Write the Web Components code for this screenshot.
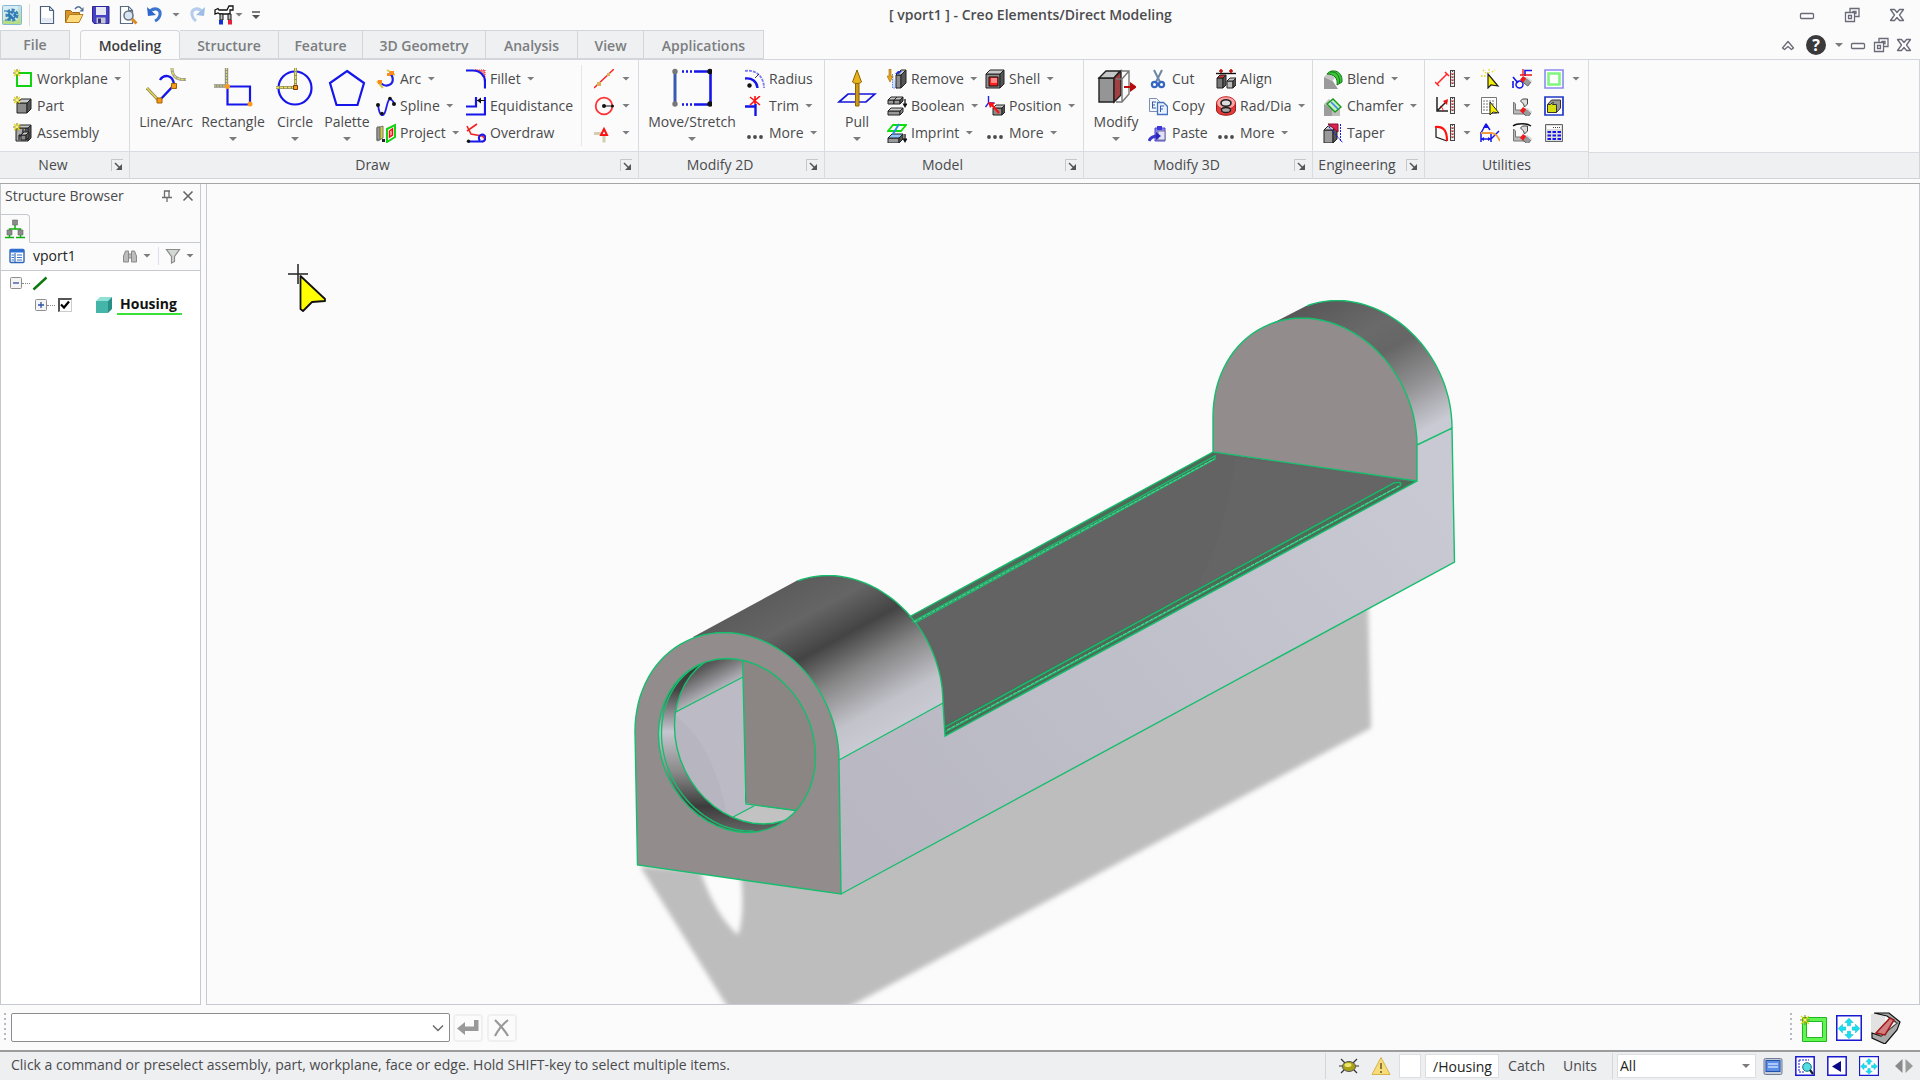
<!DOCTYPE html>
<html lang="en">
<head>
<meta charset="utf-8">
<title>[ vport1 ] - Creo Elements/Direct Modeling</title>
<style>
html, body { margin: 0; height: 100%; }
body { font: 14px/20px "Open Sans", "Noto Sans", sans-serif; color: #4a4a4c; background: #fbfbfb; overflow: hidden; }
</style>
</head>
<body>
<cr-app></cr-app>
<script>
const BASE = `
*{box-sizing:border-box}
button,input,select{font:inherit;color:inherit;margin:0;padding:0;border:0;background:none;border-radius:0;outline:0}
button{display:flex;align-items:center}
svg{display:block}
`;
function define(name, css, html) {
  customElements.define(name, class extends HTMLElement {
    constructor() {
      super();
      this.attachShadow({ mode: 'open' });
    }
    connectedCallback() {
      const body = typeof html === 'function' ? html(this) : html;
      this.shadowRoot.innerHTML = `<style>${BASE}${css}</style>${body}`;
    }
  });
}

/* ---------- icons ---------- */
const cube = (x, y, w, h, d, front = '#8c8c8c', top = '#c9c9c9', side = '#555', line = '#222') =>
  `<g stroke="${line}" stroke-linejoin="round"><path fill="${front}" d="M${x} ${y + d}h${w}v${h}h-${w}z"/><path fill="${top}" d="M${x} ${y + d}l${d}-${d}h${w}l-${d} ${d}z"/><path fill="${side}" d="M${x + w} ${y + d}l${d}-${d}v${h}l-${d} ${d}z"/></g>`;
const spark = (x, y, r = 4) =>
  `<g stroke-width="1.1"><path stroke="#8a8430" d="M${x - r} ${y}h${2 * r}M${x} ${y - r}v${2 * r}"/><path stroke="#e6d800" d="M${x - r + 1} ${y - r + 1}l${2 * r - 2} ${2 * r - 2}M${x - r + 1} ${y + r - 1}l${2 * r - 2}-${2 * r - 2}"/></g><circle cx="${x}" cy="${y}" r="1.3" fill="#fff27a"/>`;
const ruler = `<rect x="15.5" y="1.5" width="4" height="16" fill="#eee" stroke="#444"/><path stroke="#d22" d="M16 5h3M16 8h3M16 11h3M16 14h3"/><path stroke="#555" d="M17.500 2v15" stroke-dasharray="1 2"/>`;
const arrows4 = `<g fill="#18dff0" stroke="#0aa6c4" stroke-width=".4"><path d="M12 3l4 4h-2.500v3h-3v-3H8z"/><path d="M12 22l4-4h-2.500v-3h-3v3H8z"/><path d="M2 12.500l4-4V11h3v3H6v2.500z"/><path d="M22 12.500l-4-4V11h-3v3h3v2.500z"/></g>`;
const eraser = (x, y) => `<g transform="translate(${x} ${y}) rotate(38)"><rect x="3" width="7" height="5" fill="#9a9a9a" stroke="#555" stroke-width=".8"/><rect width="4" height="5" fill="#f01818"/><path fill="#d8d8d8" d="M3 0h7l1-2H4z"/></g>`;
const flag = `<path fill="#b8b8b8" stroke="#777" d="M1.500 6l2 2v6h7l3 4H1.500z"/><path fill="#ddd" stroke="#444" d="M8.500 5l2-2h5v5l-3 3-1-3z"/>`;
const PIC = {
  app: [20, `<defs><linearGradient id="a" x2="0" y2="1"><stop stop-color="#bfe0f5"/><stop offset="1" stop-color="#b4dd7c"/></linearGradient></defs><rect x=".5" y=".5" width="19" height="19" rx="1" fill="url(#a)" stroke="#86b8d6"/><rect x="1" y="1" width="15" height="14" fill="#e6f3fb" opacity=".6"/><circle cx="10" cy="10" r="5" fill="none" stroke="#3b83b8" stroke-width="3" stroke-dasharray="3 1.500"/><circle cx="10" cy="10" r="4" fill="#2c78b5"/><path stroke="#a9d0ea" stroke-width="1.200" d="M8 8l4 4M12 8l-2 2"/><path stroke="#1d6fae" d="M3 15h4M2 6h3" />`],
  newdoc: [20, `<path fill="#fff" stroke="#4c5f7c" stroke-width="1.200" d="M3.500 1.500h9l4 4v13h-13z"/><path fill="#c9d6e6" stroke="#4c5f7c" d="M12.500 1.500v4h4z"/><path fill="#e2e9f2" d="M5 13h10v4.500H5z"/>`],
  open: [20, `<path fill="#d9952c" stroke="#9a6a1c" d="M1.500 17.500v-12h5l2 2h7v3"/><path fill="#ffdb7c" stroke="#b57f22" d="M1.500 17.500l4-8h13.500l-4 8z"/><path fill="none" stroke="#4f6c92" stroke-width="1.400" d="M11 4c2-3 5-3 6.500 0"/><path fill="#4f6c92" d="M19.500 2v4.500h-4z"/>`],
  save: [20, `<path fill="#4740c2" stroke="#2b2699" d="M1.500 1.500h16.500v17H3l-1.500-2z"/><path fill="#e6e8f4" d="M5 2h10v8H5z"/><path fill="#c2c5d6" d="M5.500 12.500h9v6h-9z"/><path fill="#343078" d="M7 13.500h3v4.500H7z"/>`],
  preview: [20, `<path fill="#fff" stroke="#5a6b85" stroke-width="1.200" d="M2.500 1.500h8l4 4v13h-12z"/><path fill="#cfd9e6" stroke="#5a6b85" d="M10.500 1.500v4h4z"/><circle cx="10.500" cy="10.500" r="4.500" fill="#d7e6f2" stroke="#6b7480" stroke-width="1.500"/><path stroke="#e08b1f" stroke-width="3" d="M14 14l4.500 4.500"/>`],
  undo: [20, `<path fill="none" stroke="#3c74d0" stroke-width="3" d="M5 6c6-4.500 11-1 10 4-.5 2.500-2 4.500-5 6"/><path fill="#2c66cf" d="M2 2l1 9 8-1z"/>`],
  redo: [20, `<path fill="none" stroke="#b5cdec" stroke-width="3" d="M15 6c-6-4.500-11-1-10 4 .5 2.500 2 4.500 4 6"/><path fill="#9dbce6" d="M18 2l-1 9-8-1z"/>`],
  tools: [20, `<path fill="#fff" stroke="#111" stroke-width="1.300" d="M1 5l3-1.500 1 1.500h8l2-4h4v4h-3v4H6L4 8 1 9z"/><path fill="#bbb" stroke="#111" d="M6 9h3v6H6zM14 9h3v6h-3z"/><path fill="#1030d8" d="M5 15h4v4.500H5z"/><path fill="#e81f3a" d="M14 15h4v4.500h-4z"/>`],
  custom: [12, `<path stroke="#555" stroke-width="1.500" d="M2 3h8"/><path fill="#555" d="M2 6h8L6 10z"/>`],
  workplane: [20, `<path fill="none" stroke="#12d312" stroke-width="2" d="M4 4h14v13H4z"/>${spark(4, 4)}`],
  part: [20, `${cube(4, 3, 10, 10, 4)}${spark(4, 4)}`],
  assembly: [20, `${cube(3, 2, 12, 13, 3, '#aaa')}<path fill="#777" stroke="#111" d="M10 6v6H6v5M13 5v8h-6"/>${cube(8, 9, 5, 5, 3)}${spark(4, 4)}`],
  linearc: [40, `<path stroke="#8d8a60" stroke-width="3" d="M1 21l12 13"/><path stroke="#e8d84a" stroke-width="1.300" d="M1 21l12 13"/><path stroke="#999" stroke-width="3" fill="none" d="M26 1c0 7 3 12 14 11.500"/><path stroke="#e3d75d" stroke-width="1.500" stroke-dasharray="3 1" fill="none" d="M26 1c0 7 3 12 14 11.500"/><path stroke="#1616ea" stroke-width="2.400" fill="none" d="M14 13c3-5 13-7 14 5L13 34"/><path fill="#f29a1a" stroke="#a85f00" d="M11 31h5v5h-5zM25.500 16.500h5v5h-5z"/>`],
  rectangle: [40, `<path stroke="#8f8f86" stroke-width="3.400" d="M13.500 1v17M1 19h12"/><path stroke="#e0d96c" stroke-width="1.200" stroke-dasharray="2 1" d="M13.500 1v17M1 19h12"/><path fill="none" stroke="#1616ea" stroke-width="2.200" d="M14.500 19.500h22.500v18H14.500z"/><circle cx="14.500" cy="19.500" r="2.500" fill="#ff9a1a"/><circle cx="37" cy="37" r="2.500" fill="#ff9a1a"/>`],
  circle: [40, `<circle cx="20" cy="21" r="16.500" fill="none" stroke="#1616ea" stroke-width="2.200"/><path stroke="#8f8f60" stroke-width="3" d="M20.500 1v19M1 20.500h19"/><path stroke="#e8e05a" stroke-width="1.400" stroke-dasharray="3 1" d="M20.500 1v19M1 20.500h19"/><path fill="#f29a1a" stroke="#7a3c00" d="M18.500 18.500h4v4h-4z"/>`],
  palette: [40, `<path fill="none" stroke="#1616ea" stroke-width="2.200" d="M20 4l17 12-6.500 22h-21L3 16z"/>`],
  arc: [20, `<path fill="none" stroke="#2020e8" stroke-width="2.200" d="M13 4c5 3 5 10 0 12-4 1.500-8-.5-9-4"/><path stroke="#d8c94a" stroke-width="2" d="M11 1l8 5M1 12l6 7"/><path fill="#ff8c1a" d="M14 2h4v4h-4zM2 11h4v4H2zM11 4h3v3h-3z"/>`],
  spline: [20, `<path fill="none" stroke="#2020e8" stroke-width="1.800" d="M2 9c2 14 6 12 8 4s3-14 8-6"/><g fill="#111"><circle cx="2" cy="9" r="2"/><circle cx="6" cy="17.500" r="1.800"/><circle cx="14" cy="2.500" r="1.800"/><circle cx="18" cy="8" r="2"/></g>`],
  project: [20, `<path fill="#d9d12a" stroke="#777" d="M1 5l6-2v12l-6 3z"/><path fill="#999" stroke="#666" d="M1 4h3v13H1z"/><path fill="#fff" stroke="#13d313" stroke-width="2" d="M11 6l8-4v12l-8 5z"/><path fill="#fbb" stroke="#e11" stroke-width="1.500" d="M13.500 8l3-2v6l-3 2z"/><path fill="#222" d="M6 16h3v3H6z"/>`],
  fillet: [20, `<path fill="#f88" stroke="#e22" stroke-dasharray="1 1" d="M9 1h10v10c0-6-4-10-10-10z"/><path fill="none" stroke="#1616ea" stroke-width="2.200" d="M0 1.500h7c7 0 12 5 12 11v7"/>`],
  equidist: [20, `<path fill="none" stroke="#1616ea" stroke-width="2.200" d="M0 10.500h10V1M0 18.500h19V1"/><path stroke="#111" d="M11 4.500h8"/><path fill="#111" d="M11 4.500l4-3v6z"/>`],
  overdraw: [20, `<path stroke="#f02424" stroke-width="1.600" fill="none" d="M1 8l10-7M1 3l4 8 11 2c4 2 3 5 0 6"/><path stroke="#1616ea" stroke-width="2" fill="none" d="M3 18.500h13a3.500 3.500 0 0 0 0-7 3.500 3.500 0 0 0-2 6"/><circle cx="2.500" cy="18.300" r="1.700" fill="#111"/>`],
  cline: [20, `<path stroke="#f22" stroke-width="1.500" d="M0 19L20 0"/><path fill="#d9b25c" d="M3 13h4v4H3zM13 4h3v3h-3z"/>`],
  ccircle: [20, `<circle cx="10" cy="10" r="8.300" fill="none" stroke="#f33" stroke-width="1.800"/><path stroke="#111" d="M10 10h8"/><circle cx="10" cy="10" r="2" fill="#111"/><circle cx="18.500" cy="10" r="1.500" fill="#111"/>`],
  csym: [20, `<path stroke="#d5cdb0" stroke-width="3" d="M0 10.500h10v9"/><path fill="#fff" stroke="#f11" stroke-width="2" d="M10 6l3 6H7z"/>`],
  move: [40, `<path stroke="#3d58b0" stroke-width="3" d="M3 4v33"/><path stroke="#1616ea" stroke-width="2.600" d="M38.500 4v33M24 4.500h13M24 37.500h13"/><path stroke="#1616ea" stroke-width="2.400" stroke-dasharray="2 2" d="M10 4.500h14M10 37.500h14"/><g><circle cx="3" cy="4.500" r="2.700" fill="#777"/><circle cx="3" cy="37" r="2.700" fill="#777"/><circle cx="38" cy="4.500" r="2.700" fill="#111"/><circle cx="38" cy="37" r="2.700" fill="#111"/></g>`],
  radius: [20, `<path fill="none" stroke="#7b7bf2" stroke-width="1.800" stroke-dasharray="3 1" d="M0 2c10-2 19 5 19 17"/><path fill="none" stroke="#1616ea" stroke-width="2.400" d="M0 9.500c7-1 12 3 12.500 9.500"/><circle cx="4.500" cy="16.500" r="2.200" fill="#111"/><path stroke="#333" d="M10 9l4-4"/>`],
  trim: [20, `<path stroke="#1616ea" stroke-width="2.400" d="M0 10.500h10.500M10.500 8v12"/><path stroke="#f11" stroke-width="1.600" d="M5 1l10 8M15 0L5 9M10 0v8"/>`],
  more: [20, `<g fill="#4a4a4c"><circle cx="4" cy="14" r="1.900"/><circle cx="10" cy="14" r="1.900"/><circle cx="16" cy="14" r="1.900"/></g>`],
  pull: [40, `<path fill="none" stroke="#1616d8" stroke-width="1.700" d="M2 35l9-8h27l-9 8z"/><path fill="#d09a10" stroke="#8a6300" d="M18.500 14h3.500v25h-3.500z"/><path fill="#ecb21c" stroke="#8a6300" d="M20 3l4.500 12c-2 2-7 2-9 0z"/>`],
  remove: [20, `<path stroke="#6a8cf0" stroke-dasharray="1.500 1" fill="#cfe0ff" d="M5.500 5v14h5"/>${cube(9, 1, 5, 13, 5)}<path fill="#2233c8" d="M8 5l3-3h4l-3 3z"/><path fill="#eaa31c" stroke="#a06a00" stroke-width=".6" d="M2 0h2v7h2l-3 6-3-6h2z"/>`],
  boolean: [20, `${cube(1, 1, 6, 4, 3, '#999')}${cube(7, 1, 6, 4, 3, '#999')}${cube(1, 12, 12, 4, 3, '#999', '#ccc', '#888')}<path stroke="#111" stroke-width="1.300" d="M18 3v6"/><path fill="#111" d="M15.500 7.500h5L18 12z"/>`],
  imprint: [20, `${cube(1, 11, 11, 5, 4, '#999', '#8ec4ff')}<path fill="#fff" stroke="#0be00b" stroke-width="1.800" d="M1 8l5-6h13l-5 6z"/><path stroke="#2b8df0" stroke-width="2" d="M12 1L6 11"/><path stroke="#111" stroke-width="1.300" d="M18 11v6"/><path fill="#111" d="M15.500 15.500h5L18 20z"/>`],
  shell: [20, `${cube(1, 1, 14, 14, 4, '#8e8e8e')}<path fill="#ff1f1f" stroke="#111" d="M4 8h9v9H4z"/><path fill="#ff8a8a" d="M6 9h6v5l-6 0z"/>`],
  position: [20, `${cube(8, 9, 9, 7, 3)}<path stroke="#2020e8" stroke-width="1.400" d="M3.500 0v7l-3 4M3.500 7h6"/><path stroke="#f11" stroke-width="2.200" d="M14 17L6 8"/><path fill="#f11" d="M3 6l7 1-5 5z"/>`],
  modify: [40, `<g stroke="#222" stroke-width="1.400"><path fill="#959595" d="M3 11h15v24H3z"/><path fill="#c6c6c6" d="M3 11l7-7h14l-6 7z"/><path fill="#a04040" d="M18 11l7-7v24l-7 7z"/><path fill="none" stroke="#777" d="M20 35h6l7-8V4h-8M26 35V12l7-8M20 12h6"/></g><path stroke="#b80c0c" stroke-width="2" d="M28 20h8"/><path fill="#b80c0c" d="M34 15l7 5-7 5z"/>`],
  cut: [20, `<path stroke="#6d87a8" stroke-width="2" d="M6 1l6 12M14 1L8 13"/><circle cx="6.500" cy="15.500" r="2.600" fill="none" stroke="#3566c4" stroke-width="2.200"/><circle cx="13.500" cy="15.500" r="2.600" fill="none" stroke="#3566c4" stroke-width="2.200"/>`],
  copy: [20, `<path fill="#f4f7fc" stroke="#7b8fb4" d="M1.500 2.500h7l3 3v10h-10z"/><path stroke="#3d5a94" d="M4 6h4M4 9h3M4 12h4M4.500 6v6"/><path fill="#eaf1fc" stroke="#4472c0" stroke-width="1.300" d="M9.500 6.500h6l4 4v8h-10z"/><path stroke="#2f5fb4" d="M12 10h4M12 13h3M12.500 10v6"/>`],
  paste: [20, `<path fill="#8c86f0" stroke="#4a44cf" d="M7 5h10v13H7z"/><path fill="#fff" stroke="#777" d="M10 8h7v9h-7z" opacity=".75"/><path fill="#3e38d8" d="M9 3h5v4H9z"/><path stroke="#3a36cc" stroke-width="3" d="M1 18c2-5 6-5 9-5"/><path fill="#2a28b8" d="M8 9l5 4-5 4z"/>`],
  align: [20, `<path stroke="#111" stroke-width="1.400" d="M0 4.500h20"/><path stroke="#c01010" stroke-width="1.600" d="M5 0v4M15 0v4M3 2h4M13 2h4"/>${cube(1, 6, 6, 10, 3, '#777', '#c33')}${cube(11, 9, 6, 7, 3, '#bbb')}`],
  raddia: [20, `<path fill="#e83a3a" stroke="#9d1d1d" d="M.5 7v7c0 7 19 7 19 0V7"/><ellipse cx="10" cy="7" rx="9.500" ry="6.300" fill="#ffa4a4" stroke="#c02424"/><ellipse cx="10" cy="7" rx="5" ry="3.300" fill="#ddd" stroke="#222" stroke-width="1.600"/><ellipse cx="10" cy="14" rx="4.500" ry="2.500" fill="#aaa" stroke="#222" stroke-width="1.300"/>`],
  blend: [20, `<path fill="#9a9a9a" d="M1 8l8 3 6 9H1z"/><path fill="#c4c4c4" d="M1 8l5-5 6 6-3 3z"/><path fill="#3fc43f" stroke="#0d7a0d" d="M4 5c3-5 16-5 15 8l-5 3c1-7-3-11-10-11z"/><path fill="none" stroke="#0d7a0d" d="M7 3c6-1 10 3 9.500 11"/>`],
  chamfer: [20, `<path fill="#9c9c9c" d="M1 8l8 4v8H1z"/><path fill="#bdbdbd" d="M9 20h8v-7l-8 0zM1 8l5-5 6 6-3 3z"/><path fill="#bff0bf" stroke="#159a15" stroke-width="1.300" d="M4 8l6-5 8 8-6 5z"/><path stroke="#3a87e8" stroke-width="1.600" d="M8 6l7 7"/>`],
  taper: [20, `${cube(1, 3, 9, 13, 4, '#9a9a9a')}<path fill="#e02050" stroke="#801030" d="M5 1h10v8z"/><path stroke="#1616ea" stroke-dasharray="2 1" d="M17.500 1v18M6 4l14 16"/>`],
  meas1: [20, `<path stroke="#f22" stroke-width="1.500" d="M2 15L12 5M0 13l4 4M10 3l4 4"/>${ruler}`],
  meas2: [20, `<path stroke="#222" stroke-width="1.500" fill="none" d="M2 1v14h11M2 15L12 5"/><path fill="#e11" d="M13 3l-1 6-4-4z"/><path stroke="#e11" d="M5 10c2 1 3 3 3 5"/>${ruler}`],
  meas3: [20, `<path stroke="#222" stroke-width="1.300" fill="none" d="M1 4v10l11 4"/><path stroke="#f11" stroke-width="2.200" fill="none" d="M0 4c9-1 12 4 12 14"/>${ruler}`],
  select: [20, `<path fill="#f4ee00" stroke="#222" stroke-width="1.200" d="M8 5v14l3-3 7 1z"/><path stroke="#e8d800" stroke-width="1.300" stroke-dasharray="1.500 1.500" d="M1 7h5M3 1l4 4M9 0v4M12 3l3-2"/>`],
  list: [20, `<path fill="#fff" stroke="#777" d="M1.500 1.500h15v16h-15z"/><path stroke="#777" stroke-dasharray="2 1" d="M3 5h12M3 8h12M3 11h12M3 14h12"/><path fill="#f4ee00" stroke="#222" d="M10 6v13l3-3 6 1z"/>`],
  dims: [20, `<path stroke="#1616ea" stroke-width="1.500" fill="none" d="M1 9v10M11 9v10M1 16h10M6 1L1 10M6 1l4 6M11 16l8-8"/><path fill="#1616ea" d="M6 0l3 5H3zM1 16l3-2v4zM11 16l-3-2v4z"/><path stroke="#f29a3a" stroke-width="1.800" fill="none" d="M1 10h10c5 0 7 4 9 8"/>`],
  del1: [20, `<path stroke="#1616ea" stroke-width="1.600" fill="none" d="M1 8l5 6M1 12v7M13 7V1.500h7"/><circle cx="7.500" cy="15.500" r="3.500" fill="none" stroke="#1616ea" stroke-width="1.500"/><path stroke="#e11" stroke-width="1.300" d="M8 6h12M11 0v6"/>${eraser(11, 7)}`],
  del2: [20, `${flag}${eraser(11, 11)}`],
  del3: [20, `<path stroke="#111" stroke-width="1.500" fill="none" d="M1 3c4-3 14-3 18 0"/><g>${flag}</g>${eraser(11, 11)}`],
  wpgreen: [20, `<path fill="#fff" stroke="#8a8af0" stroke-width="1.600" d="M1 1h18v18H1z"/><path fill="#fff" stroke="#7ff77f" stroke-width="2.600" d="M4.500 4.500h11v11h-11z"/>`],
  partblue: [20, `<path fill="#fff" stroke="#2038c8" stroke-width="1.700" d="M1 1h18v18H1z"/><g stroke="#333"><path fill="#999" d="M3.500 8.500l4-4.500h9v8l-4 4.500z"/><path fill="#d6e010" d="M3.500 8.500h3l2-2h1l-1 2h4v8h-9z"/></g>`],
  calc: [20, `<path fill="#ddd" stroke="#666" d="M1.500 1.500h17v17h-17z"/><path fill="#fff" d="M3 3h14v3H3z"/><path stroke="#1616ea" stroke-width="2.200" stroke-dasharray="3.500 1.500" d="M3.500 9h14M3.500 12.500h14M3.500 16h14"/><path stroke="#444" stroke-dasharray="1 1" d="M9 4.500h7"/>`],
  launch: [12, `<path fill="none" stroke="#c4c7cb" d="M.5 12V.5H12"/><path stroke="#555" stroke-width="1.500" d="M4 4l5 5"/><path fill="#555" d="M11 5v6H5z"/>`],
  min: [16, `<rect x="1.500" y="6.500" width="13" height="5" rx="1" fill="#fff" stroke="#6a6a78" stroke-width="1.300"/>`],
  restore: [16, `<g fill="#fff" stroke="#6a6a78" stroke-width="1.300"><path d="M6 1.500h9v8H6z"/><path d="M9 4.500h3v2H9z"/><path d="M1.500 5.500h9v9h-9z"/><path d="M4.500 8.500h3v3h-3z"/></g>`],
  close: [16, `<path fill="#fff" stroke="#6a6a78" stroke-width="1.300" stroke-linejoin="round" d="M1.500 2.500h4L8 5.500l2.500-3h4L10.500 8l4 5.500h-4L8 10.500l-2.500 3h-4L5.500 8z"/>`],
  chevup: [16, `<path fill="#fff" stroke="#6a6a78" stroke-width="1.300" stroke-linejoin="round" d="M2.500 11L8 4.500l5.500 6.500-2 1.500L8 9.500l-3.500 3z"/>`],
  pin: [12, `<path fill="none" stroke="#6b6b6b" stroke-width="1.300" d="M3 1h6M3.500 1v6M8 1v6M1 7.500h10M6 8v4"/>`],
  x: [12, `<path stroke="#666" stroke-width="1.600" d="M1.500 1.500l9 9M10.500 1.500l-9 9"/>`],
  tree: [20, `<path fill="none" stroke="#10b010" stroke-width="1.500" d="M10 5v5M4.500 13v-3h11v3M0 18.500h9M11 18.500h9"/><g fill="#8c8c8c" stroke="#666" stroke-width=".6"><path d="M7.500 1h5v5h-5zM2 11h5v5H2zM13 11h5v5h-5z"/></g><path stroke="#10b010" stroke-width="1.500" d="M4.500 16v2M15.500 16v2"/>`],
  vport: [16, `<rect x="1" y="1.500" width="14" height="13" rx="1" fill="#fff" stroke="#2c66b8" stroke-width="1.400"/><path fill="#2f6fd0" d="M1 1h14v3.500H1z"/><path stroke="#3a70c0" stroke-width="1.200" d="M6 5v9M2.500 7h2.500M2.500 9.500h2.500M2.500 12h2.500M8 7h5M8 9.500h5M8 12h5"/>`],
  binoc: [16, `<path fill="#bcbcbc" stroke="#8a8a8a" d="M1.500 14V8l2-5h3v11zM14.500 14V8l-2-5h-3v11zM6.500 6h3v4h-3z"/>`],
  filter: [16, `<path fill="#d2d8d2" stroke="#8a8a8a" stroke-width="1.200" d="M1.500 1.500h13l-5 7v5l-3 1.500V8.500z"/>`],
  diag: [16, `<path stroke="#0a7a0a" stroke-width="2.400" d="M1.500 14.500l13-12"/>`],
  cubeteal: [20, `<path fill="#45b5aa" d="M2 6h12v12H2z"/><path fill="#8fe0d6" d="M2 6l4-4h12l-4 4z"/><path fill="#278f86" d="M14 6l4-4v12l-4 4z"/>`],
  plus: [12, `<rect x=".5" y=".5" width="11" height="11" rx="1" fill="#f4f4f4" stroke="#8e8e8e"/><path stroke="#3050a8" stroke-width="1.300" d="M3 6h6M6 3v6"/>`],
  minus: [12, `<rect x=".5" y=".5" width="11" height="11" rx="1" fill="#f4f4f4" stroke="#8e8e8e"/><path stroke="#3050a8" stroke-width="1.300" d="M3 6h6"/>`],
  enter: [24, `<path fill="#999" d="M1 12.500L9 6v4.500h9V4h4.500v11H9V19z"/>`],
  cancel: [24, `<path fill="none" stroke="#999" stroke-width="2.200" d="M5 4c5 5 9 9 13 16M18 4C13 8 8 14 5 20"/>`],
  chevdown: [12, `<path fill="none" stroke="#666" stroke-width="1.400" d="M1 3.500l5 5 5-5"/>`],
  wpbig: [28, `<path fill="#fff" stroke="#20b820" d="M2.500 3.500h24v24h-24z"/><path fill="#fff" stroke="#62f552" stroke-width="3" d="M4.500 5.500h20v20h-20z"/><path fill="none" stroke="#20b820" d="M6.500 7.500h16v16h-16z"/>${spark(5, 6, 5)}`],
  fit: [24, `<path fill="#fff" stroke="#1a1ad0" stroke-width="1.400" d="M.7.700h22.600v22.600H.7z"/>${arrows4}`],
  eraserbig: [32, `<path fill="#e2e2e2" d="M1 2h14v19l-9 4-5-2z"/><path fill="#a9a9a9" stroke="#111" stroke-width="1.200" d="M4 1h15l11 9-3 8-12 14-13-6v-5l9 3L27 11 17 4z"/><path fill="#f4f4f4" stroke="#555" d="M11 24L27 11l-4-2-15 13z"/><path fill="#d08080" stroke="#a01818" stroke-width="1.500" d="M6 21L20 6l4 2-9 15z"/>`],
  bug: [22, `<path stroke="#333" stroke-width="1.200" fill="none" d="M3 4l4 4M19 4l-4 4M1 11h5M21 11h-5M3 18l4-4M19 18l-4-4"/><ellipse cx="11" cy="11.500" rx="6.500" ry="5" fill="#a8a018" stroke="#555"/><ellipse cx="10" cy="10" rx="3.500" ry="2" fill="#ece86c"/>`],
  warn: [20, `<path fill="#f7dc7a" stroke="#d8b344" stroke-linejoin="round" d="M10 1.500l9 17H1z"/><path stroke="#8a7a40" stroke-width="2" d="M10 7v6M10 15v2"/>`],
  screen: [20, `<rect x="1" y="2.500" width="18" height="16" rx="1.500" fill="#c7cdd8" stroke="#6e7c98"/><rect x="3" y="4.500" width="14" height="11" fill="#5c8fe8" stroke="#2450a8"/><path stroke="#c9dcff" stroke-width="1.300" d="M5 8h10M5 11h10"/>`],
  zoomwin: [20, `<path fill="#fff" stroke="#1a1ad0" stroke-width="1.500" d="M.8.800h18.400v18.400H.8z"/><path fill="none" stroke="#1a1ad0" stroke-dasharray="2 1" d="M4 4h10M4 4v12h6"/><circle cx="12" cy="11" r="4.300" fill="#55dbe4" stroke="#177" /><path stroke="#123" stroke-width="2.200" d="M15 14l3 4"/>`],
  prev: [20, `<path fill="#fff" stroke="#1a1ad0" stroke-width="1.500" d="M.8.800h18.400v18.400H.8z"/><path fill="#0a0a88" d="M14 5v11L5 10.500z"/>`],
  lr: [20, `<path fill="#8a8a8a" d="M8.500 3v14L1 10z"/><path fill="#9a9a9a" d="M11.500 3v14l7.500-7z"/>`]
};
define('cr-icon', `:host{display:block;flex:none}`, el => {
  const [box, art] = PIC[el.getAttribute('name')];
  const size = el.getAttribute('size') || box;
  return `<svg width="${size}" height="${size}" viewBox="0 0 ${box} ${box}" fill="none" aria-hidden="true">${art}</svg>`;
});
define('cr-caret', `:host{display:block;flex:none;width:8px;height:4px;background:#7c7c7e;clip-path:polygon(0 0,100% 0,50% 100%)}`, '');
define('cr-grip', `:host{display:block;width:2px;height:30px;background:repeating-linear-gradient(#b4bac4 0 2px,transparent 2px 5px)}`, '');
define('cr-iconbutton', `:host{display:block;flex:none}button{justify-content:center;width:100%;height:100%}`,
  el => `<button aria-label="${el.getAttribute('label')}"><cr-icon name="${el.getAttribute('name')}"${el.hasAttribute('size') ? ` size="${el.getAttribute('size')}"` : ''}></cr-icon></button>`);

/* ---------- title bar ---------- */
define('cr-titlebar', `
:host{display:flex;align-items:center;height:31px;padding:0 8px 2px 2px}
.qat{display:flex;align-items:center;gap:7px;height:20px}
.sep{width:1px;height:22px;background:#dcdcde}
.near{margin-left:-6px}
h1{flex:1;margin:0;text-align:center;font-size:14px;font-weight:600;color:#4c4c4e}
.win{display:flex;gap:29px;padding-right:7px}`, `
<div class="qat">
<cr-icon name="app"></cr-icon><span class="sep"></span>
<cr-iconbutton label="New" name="newdoc"></cr-iconbutton>
<cr-iconbutton label="Open" name="open"></cr-iconbutton>
<cr-iconbutton label="Save" name="save"></cr-iconbutton>
<cr-iconbutton label="Preview" name="preview"></cr-iconbutton>
<cr-iconbutton label="Undo" name="undo"></cr-iconbutton><cr-caret></cr-caret>
<cr-iconbutton label="Redo" name="redo"></cr-iconbutton>
<cr-iconbutton label="Tools" name="tools"></cr-iconbutton><cr-caret class="near"></cr-caret>
<cr-iconbutton label="Customize" name="custom"></cr-iconbutton>
</div>
<h1>[ vport1 ] - Creo Elements/Direct Modeling</h1>
<div class="win"><cr-iconbutton label="Minimize" name="min"></cr-iconbutton><cr-iconbutton label="Restore" name="restore"></cr-iconbutton><cr-iconbutton label="Close" name="close"></cr-iconbutton></div>`);

/* ---------- tabs ---------- */
define('cr-tab', `
:host{display:block;height:29px;border:1px solid #d2d5d9;border-left-width:0;background:#eef0f2}
:host([first]){border-left-width:1px;margin-right:10px}
:host([active]){border-left-width:1px;border-bottom-color:#fbfbfb;background:#fbfbfb;border-radius:4px 4px 0 0}
button{justify-content:center;width:100%;height:27px;padding-top:2px;font-weight:600;color:#7b7d80}
:host([first]) button{padding-top:0}
:host([active]) button{color:#3c3c3e}`, `<button role="tab"><slot></slot></button>`);
define('cr-tabs', `
:host{display:flex;align-items:flex-end;height:29px;border-bottom:1px solid #d2d5d9}
.tabs{display:flex;height:29px}
.right{display:flex;align-items:center;gap:7px;margin-left:auto;height:28px;padding-right:8px}
.help{width:20px;height:20px;border-radius:50%;background:#3a3a3c;color:#fff;font-weight:700;font-size:16px;justify-content:center;margin:0 2px 0 3px}`, `
<div class="tabs" role="tablist">
<cr-tab first style="width:70px">File</cr-tab><cr-tab active style="width:100px">Modeling</cr-tab><cr-tab style="width:99px">Structure</cr-tab><cr-tab style="width:84px">Feature</cr-tab><cr-tab style="width:123px">3D Geometry</cr-tab><cr-tab style="width:92px">Analysis</cr-tab><cr-tab style="width:66px">View</cr-tab><cr-tab style="width:120px">Applications</cr-tab>
</div>
<div class="right"><cr-iconbutton label="Collapse ribbon" name="chevup"></cr-iconbutton><button class="help">?</button><cr-caret></cr-caret><cr-iconbutton label="Minimize" name="min"></cr-iconbutton><cr-iconbutton label="Restore" name="restore"></cr-iconbutton><cr-iconbutton label="Close" name="close"></cr-iconbutton></div>`);

/* ---------- ribbon ---------- */
define('cr-tool', `
:host{display:block;height:27px}
button{height:27px;white-space:nowrap}
span{margin-left:4px}
cr-caret{margin-left:6px}
:host([bare]) cr-caret{margin-left:8px}`,
  el => `<button${el.textContent ? '' : ` aria-label="${el.getAttribute('icon')}"`}><cr-icon name="${el.getAttribute('icon')}"></cr-icon>${el.hasAttribute('bare') ? '' : '<span><slot></slot></span>'}${el.hasAttribute('menu') ? '<cr-caret></cr-caret>' : ''}</button>`);
define('cr-big', `
:host{display:block;flex:none}
button{flex-direction:column;width:100%;height:81px;padding-top:2px;white-space:nowrap}
span{margin:5px -8px 0}
cr-caret{margin-top:5px}`,
  el => `<button><cr-icon name="${el.getAttribute('icon')}"></cr-icon><span><slot></slot></span>${el.hasAttribute('menu') ? '<cr-caret></cr-caret>' : ''}</button>`);
define('cr-col', `:host{display:flex;flex-direction:column;flex:none}:host([line]){border-left:1px solid #e4e6e8}`, `<slot></slot>`);
define('cr-group', `
:host{display:flex;flex-direction:column;flex:none;border-right:1px solid #d8dbdf}
.tools{display:flex;height:91px;padding:5px 0 5px var(--lead,10px)}
.foot{display:flex;align-items:center;height:28px;background:#eef0f2;border-top:1px solid #d8dbdf;border-bottom:1px solid #d2d5d9}
.foot span{flex:1;text-align:center;white-space:nowrap}
.foot cr-iconbutton{margin:0 6px 0 5px}`,
  el => `<div class="tools"><slot></slot></div><div class="foot"><span>${el.getAttribute('label')}</span>${el.hasAttribute('plain') ? '' : '<cr-iconbutton label="Options" name="launch"></cr-iconbutton>'}</div>`);
define('cr-ribbon', `
:host{display:flex;align-items:flex-start;height:124px;border-bottom:1px solid #a6a6a8}
.rest{flex:1;height:119px;background:#eef0f2;border-bottom:1px solid #d2d5d9;border-right:1px solid #d2d5d9}
.rest::before{content:"";display:block;height:92px;background:#fbfbfb;border-bottom:1px solid #d8dbdf}`, `
<cr-group label="New" style="width:130px;--lead:13px"><cr-col>
<cr-tool icon="workplane" menu>Workplane</cr-tool><cr-tool icon="part">Part</cr-tool><cr-tool icon="assembly">Assembly</cr-tool></cr-col></cr-group>
<cr-group label="Draw" style="width:509px;--lead:6px">
<cr-big icon="linearc" style="width:60px">Line/Arc</cr-big><cr-big icon="rectangle" menu style="width:74px">Rectangle</cr-big><cr-big icon="circle" menu style="width:50px">Circle</cr-big><cr-big icon="palette" menu style="width:54px">Palette</cr-big>
<cr-col style="width:92px;padding-left:2px"><cr-tool icon="arc" menu>Arc</cr-tool><cr-tool icon="spline" menu>Spline</cr-tool><cr-tool icon="project" menu>Project</cr-tool></cr-col>
<cr-col style="width:115px"><cr-tool icon="fillet" menu>Fillet</cr-tool><cr-tool icon="equidist">Equidistance</cr-tool><cr-tool icon="overdraw">Overdraw</cr-tool></cr-col>
<cr-col line style="padding-left:12px"><cr-tool bare icon="cline" menu></cr-tool><cr-tool bare icon="ccircle" menu></cr-tool><cr-tool bare icon="csym" menu></cr-tool></cr-col></cr-group>
<cr-group label="Modify 2D" style="width:186px">
<cr-big icon="move" menu style="width:86px">Move/Stretch</cr-big>
<cr-col style="padding-left:10px"><cr-tool icon="radius">Radius</cr-tool><cr-tool icon="trim" menu>Trim</cr-tool><cr-tool icon="more" menu>More</cr-tool></cr-col></cr-group>
<cr-group label="Model" style="width:259px">
<cr-big icon="pull" menu style="width:44px">Pull</cr-big>
<cr-col style="width:106px;padding-left:8px"><cr-tool icon="remove" menu>Remove</cr-tool><cr-tool icon="boolean" menu>Boolean</cr-tool><cr-tool icon="imprint" menu>Imprint</cr-tool></cr-col>
<cr-col><cr-tool icon="shell" menu>Shell</cr-tool><cr-tool icon="position" menu>Position</cr-tool><cr-tool icon="more" menu>More</cr-tool></cr-col></cr-group>
<cr-group label="Modify 3D" style="width:229px">
<cr-big icon="modify" menu style="width:44px">Modify</cr-big>
<cr-col style="width:78px;padding-left:10px"><cr-tool icon="cut">Cut</cr-tool><cr-tool icon="copy">Copy</cr-tool><cr-tool icon="paste">Paste</cr-tool></cr-col>
<cr-col><cr-tool icon="align">Align</cr-tool><cr-tool icon="raddia" menu>Rad/Dia</cr-tool><cr-tool icon="more" menu>More</cr-tool></cr-col></cr-group>
<cr-group label="Engineering" style="width:112px">
<cr-col><cr-tool icon="blend" menu>Blend</cr-tool><cr-tool icon="chamfer" menu>Chamfer</cr-tool><cr-tool icon="taper">Taper</cr-tool></cr-col></cr-group>
<cr-group label="Utilities" plain style="width:164px">
<cr-col style="width:45px"><cr-tool bare icon="meas1" menu></cr-tool><cr-tool bare icon="meas2" menu></cr-tool><cr-tool bare icon="meas3" menu></cr-tool></cr-col>
<cr-col style="width:32px"><cr-tool bare icon="select"></cr-tool><cr-tool bare icon="list"></cr-tool><cr-tool bare icon="dims"></cr-tool></cr-col>
<cr-col style="width:32px"><cr-tool bare icon="del1"></cr-tool><cr-tool bare icon="del2"></cr-tool><cr-tool bare icon="del3"></cr-tool></cr-col>
<cr-col><cr-tool bare icon="wpgreen" menu></cr-tool><cr-tool bare icon="partblue"></cr-tool><cr-tool bare icon="calc"></cr-tool></cr-col></cr-group>
<div class="rest"></div>`);

/* ---------- structure browser ---------- */
define('cr-browser', `
:host{display:flex;flex-direction:column;width:201px;flex:none;border:1px solid #c6cace;border-top:0;background:#fbfbfb}
header{display:flex;align-items:center;height:28px;padding:0 6px 4px 4px}
header span{flex:1}
header cr-iconbutton{margin-left:9px}
.tabs{height:31px;padding-top:2px;border-bottom:1px solid #c6cace}
.tabs button{width:29px;height:29px;justify-content:center;border:1px solid #c6cace;border-left:0;border-bottom-color:#fbfbfb;border-radius:0 4px 0 0;background:#fbfbfb}
.bar{display:flex;align-items:center;height:28px;padding:0 6px 2px 8px;border-bottom:1px solid #c6cace;color:#222}
.bar span{flex:1;margin-left:8px}
.bar cr-caret{margin:0 0 0 5px}
.bar i{width:1px;height:18px;background:#dde;margin:0 6px 0 7px}
.tree{flex:1;background:#fff;padding-top:1px}
.row{display:flex;align-items:center;height:22px;padding-left:9px}
.row.kid{padding-left:34px}
.dots{width:8px;border-top:1px dotted #888}
.row cr-icon[name=diag]{margin-left:2px}
input{appearance:none;width:14px;height:14px;margin-left:3px;border:1px solid #ccc;border-top:2px solid #555;border-left:2px solid #555;background:#fff}
label{display:flex;align-items:center}
.check{position:relative;display:flex}
.check cr-tick{position:absolute;left:5px;top:2px}
label cr-icon{margin:0 3px 0 22px}
b{font-weight:700;color:#111;line-height:18px;border-bottom:2px solid #3be03b;padding:0 5px 0 3px}`, `
<header><span>Structure Browser</span><cr-iconbutton label="Pin" name="pin"></cr-iconbutton><cr-iconbutton label="Close" name="x"></cr-iconbutton></header>
<div class="tabs"><button aria-label="Structure"><cr-icon name="tree"></cr-icon></button></div>
<div class="bar"><cr-icon name="vport"></cr-icon><span>vport1</span><cr-iconbutton label="Find" name="binoc"></cr-iconbutton><cr-caret></cr-caret><i></i><cr-iconbutton label="Filter" name="filter"></cr-iconbutton><cr-caret></cr-caret></div>
<div class="tree">
<div class="row"><cr-icon name="minus"></cr-icon><span class="dots"></span><cr-icon name="diag"></cr-icon></div>
<div class="row kid"><cr-icon name="plus"></cr-icon><span class="dots"></span><label><span class="check"><input type="checkbox" checked><cr-tick></cr-tick></span><cr-icon name="cubeteal"></cr-icon><b>Housing</b></label></div>
</div>`);
define('cr-tick', `:host{display:block}`, `<svg width="10" height="10"><path fill="none" stroke="#000" stroke-width="2.200" d="M1 4.500l3 3L9 1.500"/></svg>`);

/* ---------- 3D viewport ---------- */
const curve = (cx, cy, r, from, to) => {
  const pts = [];
  for (let i = 0; i <= 48; i++) {
    const t = (from + (to - from) * i / 48) * Math.PI / 180;
    pts.push((cx + r * 102 * Math.cos(t)).toFixed(1) + ' ' + (cy + r * (14.5 * Math.cos(t) - 112 * Math.sin(t))).toFixed(1));
  }
  return pts.join('L');
};
define('cr-viewport', `
:host{display:block;flex:1;min-width:0;margin-left:5px;border:1px solid #c6cace;border-top:0;background:#fbfbfb;overflow:hidden}
svg{width:100%;height:100%}`, () => {
  const faceArc = curve(737, 745.5, 1, 180, 0);
  const hole = 'M' + curve(737, 745.5, .77, 0, 360) + 'Z';
  const deep = 'M' + curve(753, 737, .77, 0, 360) + 'Z';
  return `<svg viewBox="207 184 1712 820" preserveAspectRatio="xMinYMin slice" role="img" aria-label="Housing">
<defs>
<filter id="soft" x="-5%" y="-5%" width="110%" height="110%"><feGaussianBlur stdDeviation="2.500"/></filter>
<linearGradient id="cyl" gradientUnits="userSpaceOnUse" x1="693" y1="637" x2="778" y2="793"><stop stop-color="#5c5c5c"/><stop offset=".2" stop-color="#656565"/><stop offset=".4" stop-color="#444"/><stop offset=".6" stop-color="#858585"/><stop offset=".85" stop-color="#c2c2ca"/><stop offset="1" stop-color="#cacad4"/></linearGradient>
<linearGradient id="cyl2" gradientUnits="userSpaceOnUse" x1="1271" y1="324" x2="1356" y2="478"><stop stop-color="#585858"/><stop offset=".3" stop-color="#6a6a6a"/><stop offset=".45" stop-color="#666"/><stop offset=".7" stop-color="#929294"/><stop offset=".95" stop-color="#cacad4"/></linearGradient>
<linearGradient id="side" gradientUnits="userSpaceOnUse" x1="900" y1="870" x2="1400" y2="450"><stop stop-color="#b8b7c2"/><stop offset=".5" stop-color="#c0c0ca"/><stop offset="1" stop-color="#c9c9d3"/></linearGradient>
<linearGradient id="rim" x2="0" y2="1"><stop stop-color="#333"/><stop offset=".18" stop-color="#444"/><stop offset=".42" stop-color="#c6c6d0"/><stop offset=".65" stop-color="#8a8a8a"/><stop offset=".85" stop-color="#3c3c3c"/><stop offset="1" stop-color="#666"/></linearGradient>
<linearGradient id="in" gradientUnits="userSpaceOnUse" x1="696" y1="652" x2="718" y2="693"><stop stop-color="#2e2e2e"/><stop offset=".4" stop-color="#5c5c5c"/><stop offset="1" stop-color="#bdbdc6"/></linearGradient>
<clipPath id="hole"><path d="${hole}"/></clipPath><clipPath id="deep"><path d="${deep}"/></clipPath>
</defs>
<path filter="url(#soft)" fill="#bdbdbd" fill-rule="evenodd" d="M640 866L725 1003L745 1035L800 1033L1371 728L1368 600L1100 640L841 880ZM700 870Q715 915 738 935Q745 915 741 876Z"/>
<g stroke-linejoin="round">
<path fill="#636363" d="M905 619L1213 452L1417 481L945 736L930 670Z"/>
<path fill="#686868" opacity=".4" d="M1235 458L1417 481L1190 600Q1225 540 1235 458Z"/>
<path fill="#4d6b58" d="M909 618L1213 452L1217 457L914 623ZM945 736V725L1396 481L1417 481Z"/>
<path fill="url(#side)" d="M839 760L943 703L945 736L1417 481V445L1452 428L1454.500 562L841 894Z"/>
<path fill="url(#cyl2)" d="M1271 324L1306 306L${curve(1350, 413.5, 1, 115, 0)}L1417 445L${curve(1315, 431, 1, 0, 115)}Z"/>
<path fill="#928c8d" d="M1213 452V417L${curve(1315, 431, 1, 180, 0)}L1417 481Z"/>
<path fill="url(#cyl)" d="M693 637L798 580L${curve(841, 688.5, 1, 115, 0)}L839 760L${curve(737, 745.5, 1, 0, 115)}Z"/>
<path fill="#928c8d" d="M637.500 865L635 731L${faceArc}L841 894Z"/>
</g>
<g clip-path="url(#hole)">
<path fill="url(#rim)" d="${hole}"/>
<g clip-path="url(#deep)">
<path fill="#bcbbc5" d="M660 640H745V800L760 830H660Z"/>
<path fill="#b2b1bb" opacity=".5" d="M673 714Q712 740 728 818H680Z"/>
<path fill="url(#in)" d="M665 640H743V677L665 718Z"/>
<path fill="#8b8583" d="M742.500 640L746 804L820 814V640Z"/>
<path fill="#c2c2c2" d="M733 817L746 804L820 814V840H733Z"/>
<path fill="#bcbbc5" d="M720 790L746 803L755 805L733 817Z"/>
</g></g>
<g fill="none" stroke="#16bd6c" stroke-width="1.400">
<g clip-path="url(#hole)"><path d="${deep}"/><path d="M${curve(740, 744, .77, 100, 280)}"/><g clip-path="url(#deep)"><path d="M674 713L743 677M742.500 655L746 804L800 811M733 817L754 806"/></g></g>
<path d="${hole}"/>
<path d="M637.500 865L635 731L${faceArc}L841 894Z"/>
<path d="M${curve(841, 688.5, 1, 115, 0)}L945 736L1417 481V445L${curve(1315, 431, 1, 0, 180)}L1213 452L1417 481M839 760L943 703M841 894L1454.500 562L1452 428L1417 445"/>
<path d="M${curve(1350, 413.5, 1, 115, 0)}M909 617L1213 452M912 622L1215 456V459L915 623M945 727L1394 483Q1403 481 1400 486L945 732"/>
<path stroke="#4fe39a" stroke-dasharray="4 1" stroke-width="1" d="M914 622L1214 459M947 730L1399 486"/>
</g>
<path stroke="#222" stroke-width="1.500" d="M288 274h20M298 264v20"/>
<path fill="#ff0" stroke="#111" stroke-width="1.800" stroke-linejoin="round" d="M300.500 276V309L303 311L312 302L325 301V299Z"/>
</svg>`;
});

/* ---------- command line and status bar ---------- */
define('cr-command', `
:host{display:flex;align-items:center;height:45px;padding:0 18px 0 4px}
.combo{display:flex;align-items:center;width:439px;height:29px;margin:0 3px 0 5px;border:1px solid #8c8c8e;border-radius:2px;background:#fff;padding-right:5px}
.combo input{flex:1;min-width:0;height:27px;padding:0 6px}
.act{width:30px;height:28px;margin-right:4px;border:2px solid #f0f0f1;border-radius:4px}
.right{display:flex;align-items:center;gap:8px;margin-left:auto}`, `
<cr-grip></cr-grip>
<div class="combo"><input type="text" aria-label="Command"><cr-iconbutton label="History" name="chevdown"></cr-iconbutton></div>
<cr-iconbutton class="act" label="Enter" name="enter"></cr-iconbutton><cr-iconbutton class="act" label="Cancel" name="cancel"></cr-iconbutton>
<div class="right"><cr-grip></cr-grip><cr-iconbutton label="Workplane" name="wpbig"></cr-iconbutton><cr-iconbutton label="Fit" name="fit" size="26"></cr-iconbutton><cr-iconbutton label="Erase" name="eraserbig"></cr-iconbutton></div>`);
define('cr-status', `
:host{display:flex;align-items:center;height:30px;padding:0 6px 0 11px;border-top:2px solid #9c9c9e;background:#eeeff1}
p{flex:1;margin:0;padding-bottom:2px;white-space:nowrap}
i{width:1px;height:26px;background:#d4d6d9}
.box{height:24px;background:#fff;border:1px solid #dcdee1}
input{width:74px;padding-left:7px;color:#222}
.w{width:22px;margin:0 4px 0 8px}
button{padding:0 9px}
.box.sel{display:flex;align-items:center;width:139px;margin:0 7px 0 4px;padding-right:5px}
select{appearance:none;flex:1;height:22px;padding:0 2px;color:#222}
.icons{display:flex;align-items:center;gap:12px}`, `
<p>Click a command or preselect assembly, part, workplane, face or edge. Hold SHIFT-key to select multiple items.</p>
<i></i><cr-iconbutton label="Debug" name="bug" style="margin:0 11px 0 12px"></cr-iconbutton><cr-iconbutton label="Warnings" name="warn"></cr-iconbutton>
<span class="box w"></span><input class="box" aria-label="Active part" value="/Housing"><button>Catch</button><button style="margin-right:6px">Units</button><i></i>
<div class="box sel"><select aria-label="Filter"><option>All</option></select><cr-caret></cr-caret></div>
<div class="icons"><cr-iconbutton label="Screen" name="screen"></cr-iconbutton><cr-iconbutton label="Zoom window" name="zoomwin"></cr-iconbutton><cr-iconbutton label="Previous view" name="prev"></cr-iconbutton><cr-iconbutton label="Fit" name="fit" size="20"></cr-iconbutton><cr-iconbutton label="Scroll" name="lr" style="margin-left:3px"></cr-iconbutton></div>`);

define('cr-app', `
:host{display:flex;flex-direction:column;height:100vh}
main{display:flex;flex:1;min-height:0}`, `
<cr-titlebar></cr-titlebar><cr-tabs></cr-tabs><cr-ribbon></cr-ribbon>
<main><cr-browser></cr-browser><cr-viewport></cr-viewport></main>
<cr-command></cr-command><cr-status></cr-status>`);
</script>
</body>
</html>
